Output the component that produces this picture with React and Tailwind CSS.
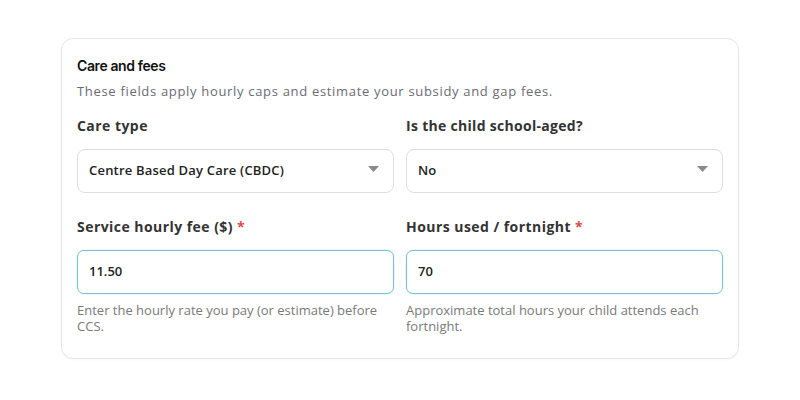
export default function App() {
  const font = { fontFamily: '"Open Sans", "Noto Sans", sans-serif' };
  return (
    <div className="w-[800px] h-[400px] bg-white" style={font}>
      <div className="pt-[38px] pl-[61px]">
        <div className="w-[678px] h-[321px] rounded-[12px] border border-[#e6e6e6] bg-white px-[15px] pt-[17px] shadow-[0_1px_2px_rgba(0,0,0,0.03)]">
          <h2 className="text-[14px] leading-[20px] font-semibold text-[#111] tracking-[-0.4px]" style={{ fontFamily: 'Inter, "Noto Sans", sans-serif' }}>Care and fees</h2>
          <p className="mt-[6px] text-[13px] leading-[18px] text-[#6b6b75] tracking-[0.68px]">These fields apply hourly caps and estimate your subsidy and gap fees.</p>
          <div className="mt-[16px] grid grid-cols-2 gap-x-[12px]">
            <div>
              <label className="block text-[14px] leading-[20px] font-bold text-[#333] tracking-[0.45px]">Care type</label>
              <div className="mt-[13px] h-[44px] rounded-[8px] border border-[#dedede] bg-white flex items-center justify-between pl-[11px] pr-[14px]">
                <span className="text-[13px] font-semibold text-[#222] tracking-[0.2px]">Centre Based Day Care (CBDC)</span>
                <svg width="11" height="7" viewBox="0 0 11 7" className="mb-[4px]"><path d="M0 0 L11 0 L5.5 6 Z" fill="#8a8a8a" /></svg>
              </div>
            </div>
            <div>
              <label className="block text-[14px] leading-[20px] font-bold text-[#333] tracking-[0.3px]">Is the child school-aged?</label>
              <div className="mt-[13px] h-[44px] rounded-[8px] border border-[#dedede] bg-white flex items-center justify-between pl-[11px] pr-[14px]">
                <span className="text-[13px] font-semibold text-[#222]">No</span>
                <svg width="11" height="7" viewBox="0 0 11 7" className="mb-[4px]"><path d="M0 0 L11 0 L5.5 6 Z" fill="#8a8a8a" /></svg>
              </div>
            </div>
            <div className="mt-[24px]">
              <label className="block text-[14px] leading-[20px] font-bold text-[#333] tracking-[0.45px]">Service hourly fee ($) <span className="text-[#e04848]">*</span></label>
              <div className="mt-[13px] h-[44px] rounded-[7px] border border-[#78c3d6] bg-white flex items-center pl-[11px] shadow-[0_0_0_1px_rgba(120,195,214,0.15)]">
                <span className="text-[13px] font-semibold text-[#222]">11.50</span>
              </div>
              <p className="mt-[8px] text-[13px] leading-[16px] text-[#7a7a7a]">Enter the hourly rate you pay (or estimate) before CCS.</p>
            </div>
            <div className="mt-[24px]">
              <label className="block text-[14px] leading-[20px] font-bold text-[#333] tracking-[0.45px]">Hours used / fortnight <span className="text-[#e04848]">*</span></label>
              <div className="mt-[13px] h-[44px] rounded-[7px] border border-[#78c3d6] bg-white flex items-center pl-[11px] shadow-[0_0_0_1px_rgba(120,195,214,0.15)]">
                <span className="text-[13px] font-semibold text-[#222]">70</span>
              </div>
              <p className="mt-[8px] text-[13px] leading-[16px] text-[#7a7a7a]">Approximate total hours your child attends each fortnight.</p>
            </div>
          </div>
        </div>
      </div>
    </div>
  );
}
